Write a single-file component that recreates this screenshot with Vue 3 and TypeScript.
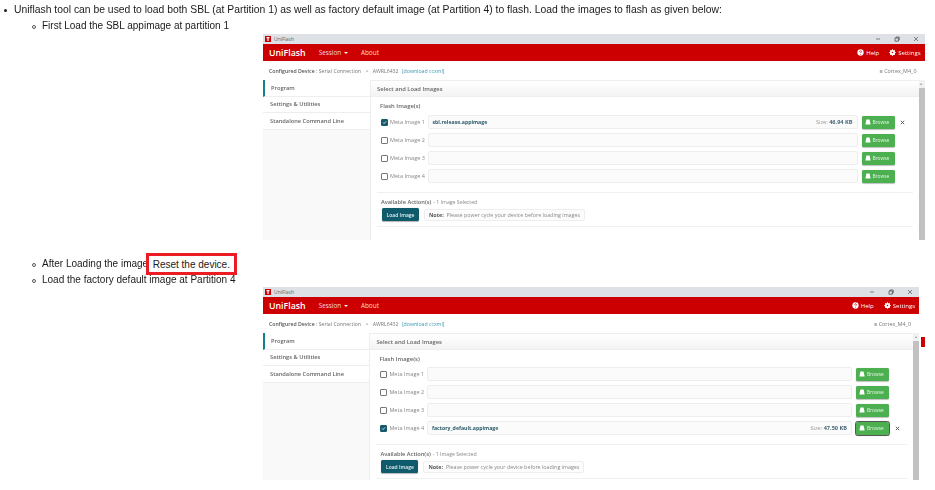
<script setup lang="ts">
interface Row { name: string; file?: string; size?: string; focused?: boolean }
interface Line { level: string; text: string; boxed?: string }
interface Section { lines: Line[]; cls: string; rows: Row[] }

const sections: Section[] = [
  {
    cls: 'win-a',
    lines: [
      { level: 'l1', text: 'Uniflash tool can be used to load both SBL (at Partition 1) as well as factory default image (at Partition 4) to flash. Load the images to flash as given below:' },
      { level: 'l2', text: 'First Load the SBL appimage at partition 1' },
    ],
    rows: [
      { name: 'Meta Image 1', file: 'sbl.release.appimage', size: '46.94 KB' },
      { name: 'Meta Image 2' },
      { name: 'Meta Image 3' },
      { name: 'Meta Image 4' },
    ],
  },
  {
    cls: 'win-b',
    lines: [
      { level: 'l2', text: 'After Loading the image', boxed: 'Reset the device.' },
      { level: 'l2', text: 'Load the factory default image at Partition 4' },
    ],
    rows: [
      { name: 'Meta Image 1' },
      { name: 'Meta Image 2' },
      { name: 'Meta Image 3' },
      { name: 'Meta Image 4', file: 'factory_default.appimage', size: '47.50 KB', focused: true },
    ],
  },
]
const navItems = ['Program', 'Settings & Utilities', 'Standalone Command Line']
</script>

<template>
  <div class="doc">
    <section v-for="s in sections" :key="s.cls" class="sec" :class="s.cls">
      <ul class="bullets">
        <li v-for="l in s.lines" :key="l.text" :class="l.level">
          {{ l.text }}<span v-if="l.boxed" class="boxed">{{ l.boxed }}</span>
        </li>
      </ul>
      <div class="win">
        <div class="titlebar">
          <svg class="logo" viewBox="0 0 6 6"><rect width="6" height="6" fill="#c00" /><path d="M1.5 1h3v1.2H3.6V5H2.4V2.2h-.9z" fill="#fff" /></svg>
          <span class="title-text">UniFlash</span>
          <span class="controls">
            <svg viewBox="0 0 6 6"><path d="M1 3h4" stroke="#666" stroke-width=".8" /></svg>
            <svg viewBox="0 0 6 6"><path d="M1 2h3.4v3.2H1zM2 2V1h3.2v3H4.4" fill="none" stroke="#555" stroke-width=".8" /></svg>
            <svg viewBox="0 0 6 6"><path d="M1 1l4 4M5 1L1 5" stroke="#666" stroke-width=".8" /></svg>
          </span>
        </div>
        <header class="redbar">
          <span class="brand">UniFlash</span>
          <span class="menu">Session <i class="caret"></i></span>
          <span class="menu">About</span>
          <span class="spacer"></span>
          <span class="tool">
            <svg viewBox="0 0 8 8"><circle cx="4" cy="4" r="3.6" fill="#fff" /><path d="M2.9 3.1c0-1.4 2.2-1.4 2.2 0 0 .9-1.1.8-1.1 1.6" fill="none" stroke="#c00" stroke-width=".8" /><circle cx="4" cy="6" r=".5" fill="#c00" /></svg>
            Help
          </span>
          <span class="tool">
            <svg viewBox="0 0 8 8"><circle cx="4" cy="4" r="2.2" fill="none" stroke="#fff" stroke-width="1.6" /><path d="M4 .3v7.4M.3 4h7.4M1.4 1.4l5.2 5.2M6.6 1.4L1.4 6.6" stroke="#fff" stroke-width="1.1" /><circle cx="4" cy="4" r=".9" fill="#c00" /></svg>
            Settings
          </span>
        </header>
        <div class="device">
          <b>Configured Device</b>&nbsp;: Serial Connection
          <span class="chev">&gt;</span> AWRL6432
          <span class="link">[download ccxml]</span>
          <span class="spacer"></span>
          <span class="core">≡ Cortex_M4_0</span>
        </div>
        <div class="body">
          <nav class="side">
            <a v-for="(n, i) in navItems" :key="n" class="nav" :class="{ active: i === 0 }">{{ n }}</a>
          </nav>
          <main class="main">
            <div class="head">Select and Load Images</div>
            <div class="content">
              <div class="flash">Flash Image(s)</div>
              <div v-for="r in s.rows" :key="r.name" class="row">
                <span class="check" :class="{ on: r.file }">
                  <svg v-if="r.file" viewBox="0 0 6 6"><path d="M1.2 3l1.3 1.3L4.9 1.6" fill="none" stroke="#fff" stroke-width=".9" /></svg>
                </span>
                <span class="label">{{ r.name }}</span>
                <div class="input">
                  <span class="file">{{ r.file }}</span>
                  <span v-if="r.size" class="size">Size: <b>{{ r.size }}</b></span>
                </div>
                <button class="browse" :class="{ focused: r.focused }">
                  <svg viewBox="0 0 6 6"><path d="M1.4.4h3.2L5.6 5.4H.4z" fill="#fff" /></svg>
                  Browse
                </button>
                <span class="remove"><svg v-if="r.file" viewBox="0 0 6 6"><path d="M1 1l4 4M5 1L1 5" stroke="#555" stroke-width="1.1" /></svg></span>
              </div>
              <div class="actions">
                <div class="act-title">Available Action(s) <small>- 1 Image Selected</small></div>
                <div class="act-row">
                  <button class="load">Load Image</button>
                  <div class="note"><b>Note:</b> Please power cycle your device before loading images</div>
                </div>
              </div>
            </div>
          </main>
          <div class="scroll"><span class="up"></span><span class="thumb"></span></div>
        </div>
        <span v-if="s.cls === 'win-b'" class="stray"></span>
      </div>
    </section>
  </div>
</template>

<style scoped>
.doc {
  width: 935px;
  height: 490px;
  overflow: hidden;
  padding-top: 2px;
  box-sizing: border-box;
  background: #fff;
  font-family: "Liberation Sans", Arial, sans-serif;
  color: #1a1a1a;
}
.bullets {
  margin: 0;
  padding: 0;
  list-style: none;
  font-size: 10px;
  line-height: 16px;
  filter: blur(0.3px);
}
.bullets li { position: relative; white-space: nowrap; }
.l1 { padding-left: 14px; font-size: 10.36px; }
.l2 { padding-left: 42px; }
.l1::before {
  content: "";
  position: absolute;
  left: 4px;
  top: 7px;
  width: 3px;
  height: 3px;
  background: #222;
  border-radius: 50%;
}
.l2::before {
  content: "";
  position: absolute;
  left: 31.5px;
  top: 7px;
  width: 2px;
  height: 2px;
  border: 0.8px solid #555;
  border-radius: 50%;
}
.boxed {
  position: relative;
  margin-left: -2.5px;
  padding: 2.5px 4px;
  border: 3px solid #ec1c24;
  background: #fff;
}
.win-b { margin-top: 16px; }

.win {
  position: relative;
  margin-left: 263px;
  display: flex;
  flex-direction: column;
  font-family: "Open Sans", "Liberation Sans", sans-serif;
  color: #555;
  filter: blur(0.5px);
}
.win-a .win { width: 661.5px; height: 206px; --side: 108px; --flash: 18px; }
.win-b .win { width: 656px; height: 193px; margin-top: -1px; --side: 107.4px; --flash: 17px; }

.titlebar {
  flex: 0 0 10px;
  display: flex;
  align-items: center;
  padding-left: 2px;
  background: #dee1e5;
  font-size: 5px;
  color: #666;
}
.logo { width: 6px; height: 6px; margin-right: 3px; }
.controls { margin-left: auto; display: flex; gap: 13px; padding-right: 6px; }
.controls svg { width: 6px; height: 6px; }

.redbar {
  flex: 0 0 17px;
  display: flex;
  align-items: center;
  padding: 0 4px 0 6px;
  background: #cc0000;
  color: #fff;
}
.brand { font-size: 8.8px; font-weight: 600; margin-right: 13px; }
.menu { font-size: 6.4px; margin-right: 13px; color: #f6dcdc; }
.caret {
  display: inline-block;
  margin-left: 1px;
  vertical-align: middle;
  border-left: 2px solid transparent;
  border-right: 2px solid transparent;
  border-top: 2px solid #fff;
}
.spacer { flex: 1; }
.tool { display: flex; align-items: center; gap: 2px; font-size: 6px; margin-left: 10px; }
.tool svg { width: 7px; height: 7px; }

.device {
  flex: 0 0 19px;
  display: flex;
  align-items: center;
  padding: 0 8px 0 6px;
  font-size: 5.2px;
  white-space: pre-wrap;
  color: #777;
  background: #fff;
}
.device b { font-weight: 600; color: #555; }
.chev { margin: 0 3px; }
.link { margin-left: 2px; color: #3b96b4; }
.core { color: #777; font-size: 5.4px; }

.body { flex: 1; min-height: 0; display: flex; }
.side {
  flex: 0 0 var(--side);
  box-sizing: border-box;
  display: flex;
  flex-direction: column;
  background: #f9f9f9;
  border-right: 1px solid #eee;
}
.nav {
  flex: 0 0 16.6px;
  box-sizing: border-box;
  display: flex;
  align-items: center;
  padding-left: 7px;
  font-size: 5.7px;
  font-weight: 600;
  color: #666;
  background: #fff;
  border-bottom: 1px solid #eee;
}
.nav.active { border-left: 2px solid #147f8f; padding-left: 6px; }

.main { flex: 1; min-width: 0; display: flex; flex-direction: column; background: #fff; }
.head {
  flex: 0 0 17px;
  box-sizing: border-box;
  display: flex;
  align-items: center;
  padding-left: 6px;
  font-size: 5.8px;
  font-weight: 600;
  color: #666;
  background: linear-gradient(#fff, #f3f3f3);
  border-top: 1px solid #eee;
  border-bottom: 1px solid #eee;
}
.content { padding: 0 6px; }
.flash {
  height: var(--flash);
  display: flex;
  align-items: center;
  padding-left: 3px;
  font-size: 5.9px;
  font-weight: 600;
  color: #666;
}
.row { display: flex; align-items: center; height: 14px; margin-bottom: 4px; padding-left: 4px; }
.check {
  flex: 0 0 5px;
  height: 5px;
  box-sizing: content-box;
  margin-right: 2px;
  border: 0.5px solid #777;
  border-radius: 1px;
  display: flex;
}
.check.on { background: #175a6c; border-color: #175a6c; }
.label { flex: 0 0 35px; font-size: 5.5px; color: #888; white-space: nowrap; }
.input {
  flex: 1;
  height: 14px;
  margin: 0 4px 0 2.5px;
  box-sizing: border-box;
  display: flex;
  align-items: center;
  justify-content: space-between;
  padding: 0 4px;
  font-size: 5.2px;
  background: #fbfbfb;
  border: 1px solid #eee;
  border-radius: 2px;
}
.file { font-weight: 700; color: #2c5a68; }
.size { color: #999; font-size: 5.6px; }
.size b { color: #48687a; font-weight: 700; }
.browse {
  flex: 0 0 33px;
  height: 13px;
  box-sizing: border-box;
  padding: 0 0 0 3px;
  display: flex;
  align-items: center;
  gap: 2px;
  font-family: inherit;
  font-size: 4.8px;
  color: #e8f7e8;
  background: #4caf50;
  border: 0;
  border-radius: 1.5px;
  box-shadow: 0 0.5px 1px rgba(0, 0, 0, 0.25);
}
.browse svg { width: 6px; height: 6px; }
.browse.focused { outline: 1px solid #555; }
.remove { flex: 0 0 18px; display: flex; justify-content: center; padding-right: 2px; box-sizing: border-box; }
.remove svg { width: 5px; height: 5px; }

.actions {
  margin-top: 9px;
  padding-top: 3px;
  height: 35px;
  box-sizing: border-box;
  border-top: 1px solid #f0f0f0;
  border-bottom: 1px solid #f0f0f0;
}
.act-title { padding-left: 4px; height: 11px; display: flex; align-items: center; gap: 2px; font-size: 5.7px; font-weight: 600; color: #666; }
.act-title small { font-size: 5.2px; font-weight: 400; color: #888; }
.act-row { display: flex; align-items: center; gap: 5px; padding-left: 5px; margin-top: 1px; }
.load {
  flex: 0 0 37px;
  height: 13px;
  padding: 0;
  font-family: inherit;
  font-size: 5px;
  font-weight: 600;
  color: #e6f0f2;
  background: #0f5a6b;
  border: 0;
  border-radius: 1.5px;
  box-shadow: 0 0.5px 1px rgba(0, 0, 0, 0.3);
}
.note {
  flex: 0 0 161px;
  box-sizing: border-box;
  height: 12px;
  display: flex;
  align-items: center;
  padding-left: 4px;
  white-space: pre;
  font-size: 5.35px;
  color: #888;
  background: #fcfcfc;
  border: 1px solid #eee;
  border-radius: 2px;
}
.note b { font-weight: 700; color: #555; margin-right: 1.5px; }

.scroll { flex: 0 0 6px; display: flex; flex-direction: column; background: #f1f1f1; }
.up {
  flex: 0 0 8px;
  position: relative;
}
.up::after {
  content: "";
  position: absolute;
  left: 1.5px;
  top: 3px;
  border-left: 1.5px solid transparent;
  border-right: 1.5px solid transparent;
  border-bottom: 2px solid #999;
}
.thumb { flex: 1; background: #c1c1c1; }
.stray {
  position: absolute;
  right: -6px;
  top: 50px;
  width: 4px;
  height: 10px;
  background: #cc0000;
}
</style>
